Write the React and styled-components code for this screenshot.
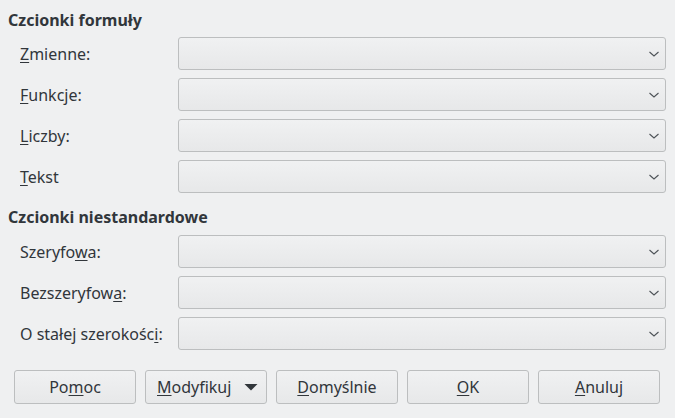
import styled, { createGlobalStyle } from 'styled-components'

const GlobalStyle = createGlobalStyle`
  html, body {
    margin: 0;
    padding: 0;
    background: #eff0f1;
  }
  body {
    font-family: "Noto Sans", "DejaVu Sans", sans-serif;
    font-size: 16px;
    color: #31363b;
  }
`

const Dialog = styled.div`
  width: 675px;
  height: 418px;
  box-sizing: border-box;
  padding: 9px 9px 0 8px;
  display: flex;
  flex-direction: column;
`

const SectionTitle = styled.div`
  font-weight: bold;
  font-size: 16px;
  line-height: 22px;
  margin-top: ${props => props.$top || 0}px;
  margin-bottom: ${props => props.$bottom || 6}px;
`

const Rows = styled.div`
  display: flex;
  flex-direction: column;
  gap: 8px;
`

const Row = styled.div`
  display: grid;
  grid-template-columns: 170px 488px;
  align-items: center;
`

const Label = styled.label`
  padding-left: 12px;
  line-height: 22px;
`

const Combo = styled.div`
  height: 33px;
  box-sizing: border-box;
  border: 1px solid #bcbebf;
  border-radius: 3px;
  background: linear-gradient(#f0f1f2, #e7e8e9);
  display: flex;
  align-items: center;
  justify-content: flex-end;
  padding-right: 5px;
`

const Buttons = styled.div`
  display: flex;
  gap: 9px;
  padding-left: 6px;
  margin-top: 20px;
`

const Button = styled.button`
  width: 122px;
  height: 34px;
  box-sizing: border-box;
  border: 1px solid #bcbebf;
  border-radius: 3px;
  background: linear-gradient(#f0f1f2, #e7e8e9);
  font-family: inherit;
  font-size: 16px;
  color: #31363b;
  display: flex;
  align-items: center;
  justify-content: ${props => (props.$menu ? 'space-between' : 'center')};
  padding: ${props => (props.$menu ? '0 8px 0 11px' : '0')};
`

const U = styled.span`
  text-decoration: underline;
  text-underline-offset: 2px;
`

const Chevron = () => (
  <svg width="12" height="8" viewBox="0 0 12 8">
    <path d="M1.5 2 L6 6 L10.5 2" fill="none" stroke="#4d5257" strokeWidth="1.1" />
  </svg>
)

const Triangle = () => (
  <svg width="14" height="8" viewBox="0 0 14 8">
    <path d="M0.5 1 L13.5 1 L7 7.5 Z" fill="#31363b" />
  </svg>
)

const LabelText = ({ text, at, len = 1 }) => (
  <>
    {text.slice(0, at)}
    <U>{text.slice(at, at + len)}</U>
    {text.slice(at + len)}
  </>
)

const formulaFonts = [
  { text: 'Zmienne:', at: 0 },
  { text: 'Funkcje:', at: 0 },
  { text: 'Liczby:', at: 0 },
  { text: 'Tekst', at: 0 },
]

const customFonts = [
  { text: 'Szeryfowa:', at: 7 },
  { text: 'Bezszeryfowa:', at: 11 },
  { text: 'O stałej szerokości:', at: 18 },
]

const FontRows = ({ items }) => (
  <Rows>
    {items.map(item => (
      <Row key={item.text}>
        <Label>
          <LabelText text={item.text} at={item.at} />
        </Label>
        <Combo>
          <Chevron />
        </Combo>
      </Row>
    ))}
  </Rows>
)

const App = () => (
  <>
    <GlobalStyle />
    <Dialog>
      <SectionTitle $bottom={6}>Czcionki formuły</SectionTitle>
      <FontRows items={formulaFonts} />
      <SectionTitle $top={13} $bottom={7}>Czcionki niestandardowe</SectionTitle>
      <FontRows items={customFonts} />
      <Buttons>
        <Button><LabelText text="Pomoc" at={2} /></Button>
        <Button $menu>
          <span><LabelText text="Modyfikuj" at={0} /></span>
          <Triangle />
        </Button>
        <Button><LabelText text="Domyślnie" at={0} /></Button>
        <Button><LabelText text="OK" at={0} /></Button>
        <Button><LabelText text="Anuluj" at={0} /></Button>
      </Buttons>
    </Dialog>
  </>
)

export default App
